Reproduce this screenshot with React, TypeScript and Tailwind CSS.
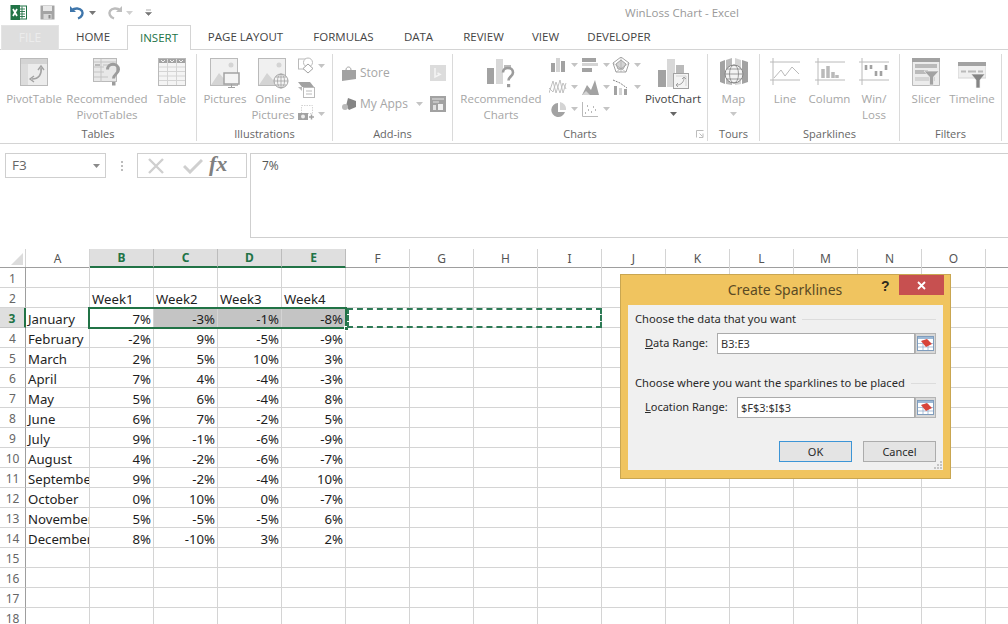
import React from "react";

const G1 = "#d4d4d4", G2 = "#bababa", G3 = "#a2a2a2", G4 = "#858585";

type SvgP = { w: number; h: number; children: React.ReactNode; className?: string };
const S = ({ w, h, children, className }: SvgP) => (
  <svg width={w} height={h} viewBox={`0 0 ${w} ${h}`} className={className} fill="none">{children}</svg>
);

const Caret = ({ c = "#c4c4c4" }: { c?: string }) => (
  <S w={7} h={4}><path d="M0 0h7L3.5 4z" fill={c} /></S>
);

const ExcelLogo = () => (
  <S w={17} h={17}>
    <rect x="7" y="2" width="9.5" height="13" fill="#fff" stroke="#217346" />
    <path d="M10 5h5M10 7.5h5M10 10h5M10 12.500h5M12 2.500v12" stroke="#217346" strokeWidth="0.9" />
    <rect x="0.500" y="1" width="9.500" height="15" fill="#217346" />
    <path d="M3 5l4 7M7 5l-4 7" stroke="#fff" strokeWidth="1.700" />
  </S>
);
const Floppy = () => (
  <S w={15} h={15}>
    <path d="M0.500 0.500h14v14h-14z" fill="#a4a4a4" />
    <rect x="3" y="1" width="9" height="5" fill="#e8e8e8" />
    <rect x="3.500" y="9" width="8" height="5.500" fill="#d8d8d8" />
    <rect x="8.500" y="10" width="2" height="3.500" fill="#8c8c8c" />
  </S>
);
const Undo = ({ c }: { c: string }) => (
  <S w={16} h={15}>
    <path d="M1 1v6h6" fill={c} />
    <path d="M2.500 5.500C6 2.500 11 3 13 6c1.500 2.500 0 6-4 7.500" stroke={c} strokeWidth="2.400" />
  </S>
);

const PivotTableIcon = () => (
  <S w={28} h={28}>
    <rect x="0.500" y="0.500" width="27" height="27" fill="#ececec" stroke={G2} />
    <rect x="1" y="1" width="26" height="5" fill={G1} />
    <rect x="1" y="6" width="7" height="21" fill="#dcdcdc" />
    <path d="M21 10c1 6-2 11-9 11" stroke={G3} strokeWidth="1.600" />
    <path d="M18 12l3-4 3 4M14 18l-4 3 4 3" stroke={G3} strokeWidth="1.400" />
  </S>
);
const RecPivotIcon = () => (
  <S w={28} h={30}>
    <rect x="0.500" y="0.500" width="23" height="23" fill="#e8e8e8" stroke={G2} />
    <path d="M1 4h22M8 1v23M1 9h10M1 14h10M1 19h14" stroke="#c4c4c4" />
    <rect x="2" y="6" width="5" height="2" fill={G2} />
    <rect x="10" y="6" width="11" height="2" fill={G1} />
    <path d="M14.500 11.500c0-7 11-7 11 0 0 4.500-5 4.500-5 9" stroke="#9c9c9c" strokeWidth="3" />
    <rect x="19" y="24" width="3.500" height="3.500" fill="#9c9c9c" />
  </S>
);
const TableIcon = () => (
  <S w={28} h={28}>
    <rect x="0.500" y="0.500" width="27" height="27" fill="#f4f4f4" stroke={G2} />
    <rect x="1" y="1" width="26" height="4" fill={G3} />
    <path d="M1 9h26M1 13.500h26M1 18h26M1 22.500h26M9.500 1v26M18.500 1v26" stroke={G1} />
    <path d="M3 2l2 2 2-2M12 2l2 2 2-2M21 2l2 2 2-2" stroke="#eee" />
  </S>
);
const PicturesIcon = ({ globe }: { globe?: boolean }) => (
  <S w={31} h={31}>
    <rect x="0.500" y="0.500" width="27" height="27" fill="#f0f0f0" stroke={G2} />
    <path d="M1 27l8-12 6 7 3-3 8 8z" fill={G1} />
    <circle cx="21" cy="7" r="2.500" fill={G1} />
    {globe ? (
      <g>
        <circle cx="23" cy="23" r="7" fill="#f4f4f4" stroke={G3} />
        <path d="M16 23h14M23 16v14M18 19h10M18 27h10" stroke={G3} strokeWidth="0.800" />
        <ellipse cx="23" cy="23" rx="3.500" ry="7" stroke={G3} strokeWidth="0.800" />
      </g>
    ) : (
      <g>
        <rect x="14" y="15" width="15" height="11" fill="#f4f4f4" stroke={G3} strokeWidth="1.500" />
        <path d="M21.500 26v3M18 29.500h7" stroke={G3} />
      </g>
    )}
  </S>
);
const ShapesIcon = () => (
  <S w={17} h={17}>
    <rect x="0.500" y="2" width="9" height="10" stroke={G2} />
    <circle cx="10" cy="5.500" r="4.500" fill="#fff" stroke={G2} />
    <path d="M10 7l5 4.500-5 4.500-5-4.500z" fill="#fff" stroke={G3} />
  </S>
);
const SmartArtIcon = () => (
  <S w={17} h={17}>
    <path d="M0 1h12l4 5H4z" fill={G3} />
    <path d="M0 6l4 4v-4z" fill={G2} />
    <rect x="5.500" y="6.500" width="11" height="10" fill="#fff" stroke={G2} />
    <path d="M8 10h6M8 13h6" stroke={G2} />
  </S>
);
const ScreenshotIcon = () => (
  <S w={17} h={17}>
    <rect x="3.500" y="0.500" width="11" height="8" stroke={G1} strokeDasharray="1.500 1" />
    <rect x="0" y="8" width="10" height="7" fill={G3} />
    <circle cx="5" cy="11.500" r="2" fill="#eee" />
    <path d="M11 12h5M13.500 9.500v5" stroke={G3} strokeWidth="1.500" />
  </S>
);

const StoreIcon = () => (
  <S w={15} h={15}>
    <path d="M0 4h14v9L0 15z" fill={G3} />
    <path d="M4 4c0-4 5-4 5 0" stroke={G3} />
  </S>
);
const AppsIcon = () => (
  <S w={15} h={15}>
    <path d="M6 1l8 3v6l-7 3-3-4z" fill={G4} />
    <circle cx="3" cy="10" r="3" fill={G2} />
  </S>
);
const BingIcon = () => (
  <div className="w-[16px] h-[16px] bg-[#dcdcdc] flex items-center justify-center">
    <S w={8} h={11}><path d="M1 0v9l5-2.500L3.500 5" stroke="#f4f4f4" strokeWidth="1.600" /></S>
  </div>
);
const TaskIcon = () => (
  <S w={16} h={16}>
    <rect width="16" height="16" fill={G3} />
    <path d="M2 3h12M3 6h6" stroke="#e4e4e4" />
    <rect x="8" y="8" width="5" height="6" fill="#f0f0f0" />
    <rect x="3" y="9" width="3" height="5" fill="#e0e0e0" />
  </S>
);

const RecChartIcon = () => (
  <S w={28} h={30}>
    <rect x="0" y="10" width="7" height="16" fill={G3} />
    <rect x="9" y="1" width="7" height="25" fill="#d8d8d8" />
    <rect x="17" y="7" width="7" height="4" fill={G2} />
    <path d="M16 14.500c0-6 10-6 10 0 0 4-4.500 4-4.500 8" stroke="#9c9c9c" strokeWidth="2.600" />
    <rect x="20" y="26" width="3.200" height="3.200" fill="#9c9c9c" />
  </S>
);
const PivotChartIcon = () => (
  <S w={31} h={32}>
    <rect x="0" y="12" width="8" height="17" fill={G3} />
    <rect x="9" y="1" width="8" height="28" fill="#d8d8d8" />
    <rect x="18" y="7" width="8" height="8" fill={G2} />
    <rect x="15.500" y="15.500" width="15" height="15" fill="#f4f4f4" stroke={G3} />
    <path d="M18 18h10v10" stroke={G1} />
    <path d="M19 27c4 0 7-3 7-7" stroke={G3} />
    <path d="M24 21l2-2 2 2M20 25l-2 2 2 2" stroke={G3} />
  </S>
);
const MapIcon = () => (
  <S w={28} h={29}>
    <path d="M0 4l5-2v24l-5-2z" fill={G3} />
    <path d="M6 2l6-2v27l-6-1z" fill={G2} />
    <path d="M15 0l6 2v24l-6 1z" fill={G1} />
    <path d="M22 2l6 2v20l-6 2z" fill={G3} />
    <circle cx="14" cy="16" r="9" fill="#f2f2f2" stroke={G4} />
    <ellipse cx="14" cy="16" rx="4.500" ry="9" stroke={G4} strokeWidth="0.800" />
    <path d="M5 16h18M7 11h14M7 21h14" stroke={G4} strokeWidth="0.800" />
  </S>
);
const SparkFrame = ({ children }: { children: React.ReactNode }) => (
  <S w={30} h={27}>
    <path d="M3 0v27M0 4h30M0 22h30" stroke={G2} />
    {children}
  </S>
);
const SlicerIcon = () => (
  <S w={28} h={28}>
    <rect x="0" y="0" width="28" height="28" fill="#ececec" />
    <path d="M0.500 0.500h27v27h-27z" stroke={G2} />
    <rect x="0" y="0" width="28" height="4" fill={G3} />
    <rect x="3" y="6" width="22" height="4" fill={G2} />
    <rect x="3" y="12" width="13" height="4" fill={G2} />
    <rect x="3" y="19" width="20" height="4" fill={G1} />
    <path d="M12 13h15l-5.500 6v8h-4v-8z" fill={G3} stroke="#f0f0f0" strokeWidth="0.700" />
  </S>
);
const TimelineIcon = () => (
  <S w={28} h={26}>
    <rect x="0" y="0" width="28" height="16" fill="#efefef" stroke={G1} />
    <rect x="0" y="0" width="28" height="4" fill={G3} />
    <path d="M3 9.500h5M10 9.500h8M20 9.500h5" stroke={G2} strokeWidth="2" />
    <path d="M13 12h14l-5 6v8h-4v-8z" fill={G4} stroke="#f0f0f0" strokeWidth="0.700" />
  </S>
);

const ChartSmall = ({ k }: { k: string }) => {
  const icon: Record<string, React.ReactNode> = {
    col: <><rect x="2" y="6" width="4" height="9" fill={G3} /><rect x="7" y="1" width="4" height="14" fill={G1} /><rect x="12" y="4" width="4" height="11" fill={G3} /></>,
    bar: <><rect x="1" y="1" width="14" height="4" fill={G3} /><rect x="1" y="6" width="16" height="3" fill={G1} /><rect x="1" y="11" width="10" height="4" fill={G3} /></>,
    radar: <><path d="M9 0l8 6-3 9H4L1 6z" stroke={G3} /><path d="M9 3l5 4-3 5H6L4 7z" fill={G1} stroke={G3} /><path d="M9 0v15M1 6l13 9M17 6L4 15" stroke={G3} strokeWidth="0.600" /></>,
    line: <path d="M0 14L4 2l3 12L11 1l3 13 3-10M0 9L4 13l3-10 4 11 3-10 3 6" stroke={G2} strokeWidth="0.900" />,
    area: <><path d="M1 16l5-10 4 5 4-10 4 15z" fill={G3} /><path d="M1 16l4-4 4 4z" fill={G1} /></>,
    combo: <><rect x="2" y="7" width="3" height="9" fill={G3} /><rect x="7" y="9" width="3" height="7" fill={G1} /><rect x="12" y="10" width="3" height="6" fill={G3} /><path d="M1 1l7 3 7 5" stroke={G4} strokeDasharray="2 1" /></>,
    pie: <><path d="M9 2a7 7 0 1 0 7 9H9z" fill={G3} /><path d="M11 1a7 7 0 0 1 6 8h-6z" fill={G1} /></>,
    scatter: <><path d="M1.500 1v14.500H17" stroke={G2} /><path d="M4 12h1M7 9h1M10 11h1M12 6h1M14 9h1M6 5h1" stroke={G3} strokeWidth="1.500" /></>,
  };
  return (
    <div className="flex items-center gap-[4px] w-[33px] h-[22px]">
      <S w={18} h={17}>{icon[k]}</S>
      <Caret />
    </div>
  );
};

const Big = ({ w, lines, icon, dark, caret, iconPad }: { w: string; lines: string[]; icon: React.ReactNode; dark?: boolean; caret?: boolean; iconPad?: string }) => (
  <div className={`${w} shrink-0 flex flex-col items-center`}>
    <div className={`h-[34px] flex items-start justify-center ${iconPad ?? "pt-[1px]"}`}>{icon}</div>
    {lines.map((l) => (
      <div key={l} className={`h-[16px] leading-[16px] text-[11.500px] whitespace-nowrap ${dark ? "text-[#444444]" : "text-[#a6a6a6]"}`}>{l}</div>
    ))}
    {caret && <div className="h-[14px] flex items-center"><Caret c={dark ? "#666666" : "#c8c8c8"} /></div>}
  </div>
);

const Group = ({ w, label, children }: { w: string; label: string; children: React.ReactNode }) => (
  <div className={`${w} shrink-0 h-[87px] flex flex-col border-r border-[#dadada] relative`}>
    <div className="flex-1 flex pt-[3px] min-h-0">{children}</div>
    <div className="h-[14px] leading-[14px] text-[11px] text-center text-[#666666]">{label}</div>
  </div>
);

const Ribbon = () => (
  <div className="h-[94px] border-b border-[#d4d4d4] flex pt-[4px]">
    <Group w="w-[197px]" label="Tables">
      <Big w="w-[68px]" lines={["PivotTable"]} icon={<PivotTableIcon />} />
      <Big w="w-[78px]" lines={["Recommended", "PivotTables"]} icon={<RecPivotIcon />} />
      <Big w="w-[51px]" lines={["Table"]} icon={<TableIcon />} />
    </Group>
    <Group w="w-[136px]" label="Illustrations">
      <Big w="w-[56px]" lines={["Pictures"]} icon={<PicturesIcon />} />
      <Big w="w-[40px]" lines={["Online", "Pictures"]} icon={<PicturesIcon globe />} />
      <div className="flex flex-col gap-[6px] pl-[5px]">
        <div className="h-[17px] flex items-center gap-[3px]"><ShapesIcon /><Caret /></div>
        <div className="h-[17px] flex items-center gap-[3px] mt-[1px]"><SmartArtIcon /></div>
        <div className="h-[17px] flex items-center gap-[3px] mt-[1px]"><ScreenshotIcon /><Caret /></div>
      </div>
    </Group>
    <Group w="w-[120px]" label="Add-ins">
      <div className="flex flex-col w-full pl-[9px] pr-[6px] pt-[8px] gap-[15px]">
        <div className="flex items-center h-[16px] gap-[3px]">
          <StoreIcon />
          <span className="text-[12px] text-[#a6a6a6] flex-1">Store</span>
          <BingIcon />
        </div>
        <div className="flex items-center h-[16px] gap-[3px]">
          <AppsIcon />
          <span className="text-[12px] text-[#a6a6a6] flex-1">My Apps</span>
          <span className="mr-[4px] flex"><Caret /></span>
          <TaskIcon />
        </div>
      </div>
    </Group>
    <Group w="w-[255px]" label="Charts">
      <Big w="w-[96px]" lines={["Recommended", "Charts"]} icon={<RecChartIcon />} />
      <div className="w-[95px] shrink-0 -mt-[3px] grid grid-cols-3 auto-rows-[22px] content-start">
        {["col", "bar", "radar", "line", "area", "combo", "pie", "scatter"].map((k) => <ChartSmall key={k} k={k} />)}
      </div>
      <Big w="w-[58px]" lines={["PivotChart"]} icon={<PivotChartIcon />} dark caret />
      <div className="absolute right-[3px] bottom-[3px]">
        <S w={8} h={8}><path d="M0.500 7.500v-7h7M7 3.500v4H3M3.500 3.500l3 3" stroke="#bcbcbc" /></S>
      </div>
    </Group>
    <Group w="w-[52px]" label="Tours">
      <Big w="w-[51px]" lines={["Map"]} icon={<MapIcon />} caret />
    </Group>
    <Group w="w-[140px]" label="Sparklines">
      <div className="w-[3px]" />
      <Big w="w-[44px]" lines={["Line"]} icon={<SparkFrame><path d="M4 20l7-8 4 6 7-9 7 7" stroke={G2} /></SparkFrame>} />
      <Big w="w-[45px]" lines={["Column"]} icon={<SparkFrame><path d="M8 20v-9M13 20V8M18 20v-6M22 20v-3" stroke={G2} strokeWidth="3.500" /></SparkFrame>} />
      <Big w="w-[44px]" lines={["Win/", "Loss"]} icon={<SparkFrame><path d="M7 7v5M12 7v4M17 13v5M22 13v5M27 7v5" stroke={G3} strokeWidth="2.600" /></SparkFrame>} />
    </Group>
    <Group w="w-[102px]" label="Filters">
      <Big w="w-[52px]" lines={["Slicer"]} icon={<SlicerIcon />} />
      <Big w="w-[40px]" lines={["Timeline"]} icon={<TimelineIcon />} iconPad="pt-[5px]" />
    </Group>
  </div>
);

const tabs: [string, string][] = [
  ["HOME", "w-[68px]"], ["INSERT", "w-[64px]"], ["PAGE LAYOUT", "w-[109px]"], ["FORMULAS", "w-[87px]"],
  ["DATA", "w-[63px]"], ["REVIEW", "w-[67px]"], ["VIEW", "w-[57px]"], ["DEVELOPER", "w-[90px]"],
];

const Tabs = () => (
  <div className="h-[25px] flex border-b border-[#d4d4d4] pl-[1px]">
    <div className="w-[58px] h-[25px] bg-[#dedede] border border-[#e4e4e4] border-b-0 text-[12px] text-[#ececec] flex items-center justify-center">FILE</div>
    {tabs.map(([t, w]) =>
      t === "INSERT" ? (
        <div key={t} className={`${w} h-[25px] bg-white border border-b-0 border-[#d4d4d4] text-[11.500px] text-[#217346] flex items-center justify-center`}>{t}</div>
      ) : (
        <div key={t} className={`${w} h-[24px] text-[11.500px] text-[#444444] flex items-center justify-center`}>{t}</div>
      )
    )}
  </div>
);

const TitleBar = () => (
  <div className="h-[25px] flex items-center relative pl-[10px]">
    <ExcelLogo />
    <span className="ml-[13px] flex"><Floppy /></span>
    <span className="ml-[14px] flex"><Undo c="#3f76ab" /></span>
    <span className="ml-[4px] flex"><Caret c="#777777" /></span>
    <span className="ml-[11px] flex -scale-x-100"><Undo c="#bdbdbd" /></span>
    <span className="ml-[3px] flex"><Caret c="#d0d0d0" /></span>
    <span className="ml-[12px] flex"><S w={7} h={7}><path d="M1 1h5M0.500 3.500h6L3.500 6.500z" fill="#777777" stroke="#777777" strokeWidth="0.600" /></S></span>
    <div className="absolute left-0 right-0 top-0 h-[25px] pl-[356px] flex items-center justify-center text-[11.500px] text-[#999999]">WinLoss Chart - Excel</div>
  </div>
);

const FormulaBar = () => (
  <div className="flex h-[85px] mt-[9px]">
    <div className="w-[101px] h-[25px] ml-[5px] border border-[#cfcfcf] flex items-center justify-between pl-[6px] pr-[5px] text-[13.500px] text-[#666666]">
      <span>F3</span><Caret c="#8a8a8a" />
    </div>
    <div className="w-[31px] h-[25px] flex items-center justify-center">
      <div className="flex flex-col gap-[2px]">
        <div className="w-[2px] h-[2px] bg-[#bcbcbc]" /><div className="w-[2px] h-[2px] bg-[#bcbcbc]" /><div className="w-[2px] h-[2px] bg-[#bcbcbc]" />
      </div>
    </div>
    <div className="w-[110px] h-[25px] border border-[#cfcfcf] flex items-center pl-[9px]">
      <S w={18} h={18}><path d="M2 2l14 14M16 2L2 16" stroke="#cfcfcf" strokeWidth="2.400" /></S>
      <span className="ml-[18px] flex"><S w={20} h={16}><path d="M1 8l6 6L19 2" stroke="#cfcfcf" strokeWidth="3" /></S></span>
      <span className="ml-[6px] -mt-[3px] text-[22px] leading-[20px] italic font-bold text-[#808080] [font-family:'Liberation_Serif',serif]">fx</span>
    </div>
    <div className="flex-1 ml-[3px] border border-r-0 border-[#cfcfcf] pl-[11px] pt-[3px] text-[12px] text-[#555555]">7%</div>
  </div>
);

const cols = ["A", "B", "C", "D", "E", "F", "G", "H", "I", "J", "K", "L", "M", "N", "O", ""];
const data: string[][] = [
  [], ["", "Week1", "Week2", "Week3", "Week4"],
  ["January", "7%", "-3%", "-1%", "-8%"], ["February", "-2%", "9%", "-5%", "-9%"],
  ["March", "2%", "5%", "10%", "3%"], ["April", "7%", "4%", "-4%", "-3%"],
  ["May", "5%", "6%", "-4%", "8%"], ["June", "6%", "7%", "-2%", "5%"],
  ["July", "9%", "-1%", "-6%", "-9%"], ["August", "4%", "-2%", "-6%", "-7%"],
  ["September", "9%", "-2%", "-4%", "10%"], ["October", "0%", "10%", "0%", "-7%"],
  ["November", "5%", "-5%", "-5%", "6%"], ["December", "8%", "-10%", "3%", "2%"],
  [], [], [], [],
];

const Sheet = () => (
  <div className="mt-[11px] relative [font-family:'Noto_Sans',sans-serif]">
    <div className="flex h-[19px] border-b border-[#9e9e9e]">
      <div className="w-[26px] shrink-0 border-r border-[#d4d4d4] relative">
        <div className="absolute right-[2px] bottom-[2px] w-0 h-0 border-l-[12px] border-l-transparent border-b-[12px] border-b-[#dcdcdc]" />
      </div>
      {cols.map((c, i) => {
        const sel = i >= 1 && i <= 4;
        return (
          <div key={i} className={`w-[64px] shrink-0 h-[19px] border-r flex items-center justify-center text-[12px] ${sel ? "bg-[#dfdfdf] border-[#bcbcbc] border-b-2 border-b-[#217346] font-bold text-[#217346]" : "border-[#d4d4d4] text-[#555555]"}`}>{c}</div>
        );
      })}
    </div>
    {data.map((row, r) => (
      <div key={r} className="flex h-[20px]">
        <div className={`w-[26px] shrink-0 border-b border-r pt-[2px] flex items-center justify-center text-[12px] ${r === 2 ? "bg-[#dfdfdf] border-r-2 border-r-[#217346] border-b-[#c4c4c4] font-bold text-[#217346]" : "border-b-[#d4d4d4] border-r-[#9e9e9e] text-[#666666]"}`}>{r + 1}</div>
        {cols.map((_, i) => {
          const v = row[i] ?? "";
          const num = /%$/.test(v);
          const shade = r === 2 && i >= 2 && i <= 4;
          return (
            <div key={i} className={`w-[64px] shrink-0 border-b border-r border-[#d4d4d4] overflow-hidden whitespace-nowrap text-[13.200px] leading-[22px] pl-[2px] pr-[2px] text-[#1e1e1e] ${num ? "text-right" : "text-left"} ${shade ? "bg-[#c4c4c4]" : ""}`}>{v}</div>
          );
        })}
      </div>
    ))}
    <div className="absolute left-[88px] top-[58px] w-[259px] h-[22px] border-2 border-[#217346]" />
    <div className="absolute left-[344px] top-[77px] w-[5px] h-[5px] bg-[#217346] border border-white" />
    <div className="absolute left-[347px] top-[59px] w-[255px] h-[20px] border-2 border-dashed border-[#2d7a55]" />
  </div>
);

const Picker = () => (
  <div className="w-[21px] h-[21px] bg-[#d8d8d8] border border-[#b4b4b4] flex items-center justify-center">
    <S w={17} h={15}>
      <rect x="0.500" y="0.500" width="16" height="14" fill="#fff" stroke="#7f9cbc" />
      <rect x="1" y="1" width="15" height="2" fill="#9db9d6" />
      <path d="M1 7.500h15M1 11h15M6 4v10M11 4v10" stroke="#8aa8c8" strokeWidth="0.700" />
      <path d="M4 5l6-2 5 5-6 3z" fill="#d8443a" />
    </S>
  </div>
);

const Heading = ({ t }: { t: string }) => (
  <div className="flex items-center h-[16px] gap-[6px]">
    <span className="text-[11.200px] text-[#2a2a2a] whitespace-nowrap">{t}</span>
    <div className="flex-1 h-px bg-[#dcdcdc]" />
  </div>
);

const Dialog = () => (
  <div className="absolute left-[620px] top-[274px] w-[331px] h-[205px] bg-[#f0c45f] border border-[#c9a651] flex flex-col px-[7px] [font-family:'Noto_Sans',sans-serif]">
    <div className="h-[30px] shrink-0 relative flex items-center justify-center pb-[2px] text-[14px] text-[#5a4a24] pr-[1px]">
      Create Sparklines
      <span className="absolute left-[253px] top-[1px] text-[14px] font-bold text-[#2f2a1c] [font-family:'Liberation_Sans',sans-serif]">?</span>
      <div className="absolute right-[-1px] top-0 w-[45px] h-[20px] bg-[#c75050] flex items-center justify-center">
        <S w={9} h={9}><path d="M1 1l7 7M8 1L1 8" stroke="#fff" strokeWidth="1.800" /></S>
      </div>
    </div>
    <div className="h-[165px] bg-[#f0f0f0] pl-[7px] pr-[7px] pt-[6px] relative">
      <Heading t="Choose the data that you want" />
      <div className="flex items-center h-[21px] mt-[6px] pl-[10px]">
        <span className="w-[72px] text-[11px] text-[#2a2a2a] whitespace-nowrap"><span className="underline">D</span>ata Range:</span>
        <div className="flex-1 h-[21px] bg-white border border-[#ababab] text-[11px] leading-[19px] pl-[3px] text-[#333333]">B3:E3</div>
        <Picker />
      </div>
      <div className="mt-[21px]"><Heading t="Choose where you want the sparklines to be placed" /></div>
      <div className="flex items-center h-[21px] mt-[6px] pl-[10px]">
        <span className="w-[92px] text-[11px] text-[#2a2a2a] whitespace-nowrap"><span className="underline">L</span>ocation Range:</span>
        <div className="flex-1 h-[21px] bg-white border border-[#ababab] text-[11px] leading-[19px] pl-[3px] text-[#333333]">$F$3:$I$3</div>
        <Picker />
      </div>
      <div className="flex justify-end gap-[11px] mt-[23px]">
        <div className="w-[73px] h-[21px] bg-[#e4e4e4] border border-[#3d95d6] text-[11px] leading-[19px] text-center text-[#2a2a2a]">OK</div>
        <div className="w-[73px] h-[21px] bg-[#e4e4e4] border border-[#acacac] text-[11px] leading-[19px] text-center text-[#2a2a2a]">Cancel</div>
      </div>
      <div className="absolute right-[1px] bottom-[1px]">
        <S w={8} h={8}><path d="M6 0h2v2H6zM3 3h2v2H3zM6 3h2v2H6zM0 6h2v2H0zM3 6h2v2H3zM6 6h2v2H6z" fill="#c4c4c4" /></S>
      </div>
    </div>
  </div>
);

export default function App() {
  return (
    <div className="relative w-[1008px] h-[624px] overflow-hidden bg-white [font-family:'Open_Sans',sans-serif]">
      <TitleBar />
      <Tabs />
      <Ribbon />
      <FormulaBar />
      <Sheet />
      <Dialog />
    </div>
  );
}
